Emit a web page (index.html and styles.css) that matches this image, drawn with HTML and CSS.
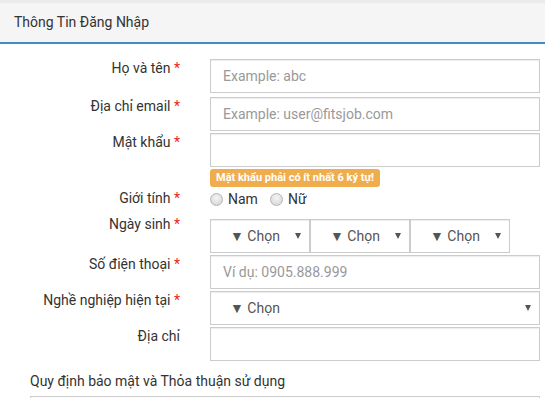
FILE: index.html
```html
<!DOCTYPE html>
<html lang="vi">

<head>
  <meta charset="UTF-8">
  <meta name="viewport" content="width=device-width, initial-scale=1.0">
  <title>Thông Tin Đăng Nhập</title>
  <link rel="stylesheet" href="styles.css">
</head>

<body>
  <div class="panel">
    <div class="panel-heading">Thông Tin Đăng Nhập</div>

    <form class="panel-body">
      <div class="form-row row-first">
        <label class="form-label">Họ và tên <span class="req">*</span></label>
        <div class="form-control-wrap">
          <input type="text" class="form-input" placeholder="Example: abc">
        </div>
      </div>

      <div class="form-row">
        <label class="form-label">Địa chỉ email <span class="req">*</span></label>
        <div class="form-control-wrap">
          <input type="text" class="form-input" placeholder="Example: user@fitsjob.com">
        </div>
      </div>

      <div class="form-row">
        <label class="form-label">Mật khẩu <span class="req">*</span></label>
        <div class="form-control-wrap">
          <input type="password" class="form-input">
          <div class="badge-warning">Mật khẩu phải có ít nhất 6 ký tự!</div>
        </div>
      </div>

      <div class="form-row row-gender">
        <label class="form-label">Giới tính <span class="req">*</span></label>
        <div class="form-control-wrap radios">
          <label class="radio"><input type="radio" name="gender"> Nam</label>
          <label class="radio"><input type="radio" name="gender"> Nữ</label>
        </div>
      </div>

      <div class="form-row row-date">
        <label class="form-label">Ngày sinh <span class="req">*</span></label>
        <div class="form-control-wrap date-group">
          <div class="select-wrap date-select">
            <select class="form-select"><option>▼ Chọn</option></select>
          </div>
          <div class="select-wrap date-select">
            <select class="form-select"><option>▼ Chọn</option></select>
          </div>
          <div class="select-wrap date-select">
            <select class="form-select"><option>▼ Chọn</option></select>
          </div>
        </div>
      </div>

      <div class="form-row">
        <label class="form-label">Số điện thoại <span class="req">*</span></label>
        <div class="form-control-wrap">
          <input type="text" class="form-input" placeholder="Ví dụ: 0905.888.999">
        </div>
      </div>

      <div class="form-row">
        <label class="form-label">Nghề nghiệp hiện tại <span class="req">*</span></label>
        <div class="form-control-wrap">
          <div class="select-wrap">
            <select class="form-select"><option>▼ Chọn</option></select>
          </div>
        </div>
      </div>

      <div class="form-row">
        <label class="form-label">Địa chỉ</label>
        <div class="form-control-wrap">
          <input type="text" class="form-input">
        </div>
      </div>

      <div class="terms">
        <h4>Quy định bảo mật và Thỏa thuận sử dụng</h4>
        <div class="terms-box"></div>
      </div>
    </form>
  </div>
</body>

</html>
```

FILE: styles.css
```css
body,
html {
  margin: 0;
  font-family: Roboto, "Noto Sans", Arial, sans-serif;
  font-size: 14px;
  color: #333;
  background: #fff;
}

.panel {
  border-top: 3px solid #ebebeb;
}

.panel-heading {
  height: 39px;
  line-height: 39px;
  padding-left: 14px;
  background-color: #f5f5f5;
  border-bottom: 2px solid #428bca;
}

.panel-body {
  padding: 15px 5px 0 30px;
}

.form-row {
  display: flex;
  margin-bottom: 2px;
}

.form-row.row-first {
  margin-bottom: 4px;
}

.form-label {
  width: 150px;
  margin-right: 30px;
  text-align: right;
  line-height: 18px;
  flex-shrink: 0;
}

.req {
  color: #ee1c1c;
}

.form-control-wrap {
  width: 330px;
}

.form-input,
.form-select {
  display: block;
  width: 100%;
  height: 34px;
  box-sizing: border-box;
  border: 1px solid #ccc;
  border-radius: 0;
  box-shadow: inset 0 1px 1px rgba(0, 0, 0, 0.075);
  font-family: inherit;
  font-size: 14px;
  color: #555;
  background: #fff;
  margin: 0;
}

.form-input {
  padding: 0 12px;
}

.form-input::placeholder {
  color: #999;
}

.badge-warning {
  width: fit-content;
  margin-top: 2px;
  height: 18px;
  line-height: 18px;
  padding: 0 6px;
  border-radius: 3px;
  background-color: #f0ad4e;
  color: #fff;
  font-size: 11px;
  font-weight: bold;
}

.row-gender {
  height: 24px;
}

.radios {
  display: flex;
  gap: 12px;
  height: 20px;
  align-items: center;
}

.radio {
  display: flex;
  align-items: center;
  gap: 5px;
  color: #333;
}

.radio input {
  appearance: none;
  width: 13px;
  height: 13px;
  margin: 0;
  border: 1px solid #b4b4b4;
  border-radius: 50%;
  background: radial-gradient(circle at 50% 35%, #f4f4f4, #d2d2d2);
}

.row-date .form-control-wrap {
  padding-top: 4px;
}

.date-group {
  display: flex;
}

.select-wrap {
  position: relative;
}

.date-select {
  width: 100px;
}

.form-select {
  appearance: none;
  padding: 0 0 0 19px;
}

.select-wrap::after {
  content: "";
  position: absolute;
  right: 9px;
  top: 14px;
  border-left: 3px solid transparent;
  border-right: 3px solid transparent;
  border-top: 6px solid #555;
  pointer-events: none;
}

.terms {
  margin-top: 11px;
}

.terms h4 {
  margin: 0 0 6px;
  font-size: 14px;
  font-weight: normal;
  line-height: 18px;
}

.terms-box {
  height: 40px;
  border: 1px solid #ccc;
}
```
